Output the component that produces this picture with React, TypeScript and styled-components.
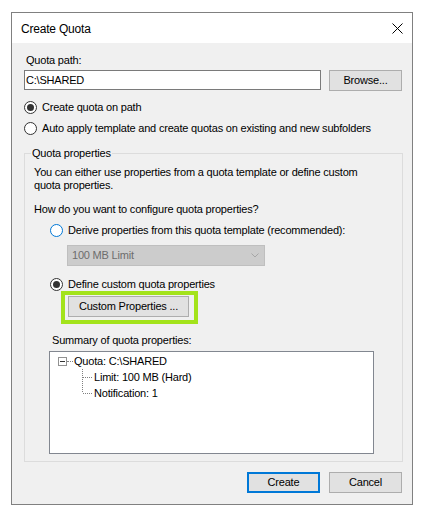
import React from 'react';
import styled, { createGlobalStyle } from 'styled-components';

const Global = createGlobalStyle`
  html, body { margin: 0; padding: 0; background: #fff; }
  body {
    font-family: "Liberation Sans", Arial, sans-serif;
    font-size: 11px;
    color: #000;
  }
  * { box-sizing: border-box; }
`;

const Page = styled.div`
  padding: 12px 0 0 11px;
`;

const Window = styled.div`
  width: 402px;
  height: 493px;
  border: 1px solid #808080;
  display: flex;
  flex-direction: column;
  background: #f0f0f0;
`;

const TitleBar = styled.div`
  height: 30px;
  flex: none;
  background: #fff;
  display: flex;
  align-items: center;
  justify-content: space-between;
  padding: 1px 9px 0 9px;
`;

const Title = styled.span`
  font-size: 12px;
  letter-spacing: -0.2px;
`;

const Body = styled.div`
  flex: 1;
  display: flex;
  flex-direction: column;
  padding: 11px 9px 11px 12px;
  letter-spacing: -0.2px;
  line-height: 13px;
`;

const Label = styled.div<{ $mt?: number; $ml?: number }>`
  line-height: 13px;
  white-space: nowrap;
  margin-top: ${(p) => p.$mt ?? 0}px;
  margin-left: ${(p) => p.$ml ?? 0}px;
`;

const InputRow = styled.div`
  display: flex;
  align-items: flex-start;
  gap: 8px;
  margin-top: 3px;
`;

const TextBox = styled.div`
  width: 297px;
  height: 20px;
  border: 1px solid #7a7a7a;
  background: #fff;
  padding: 0 1px;
  line-height: 18px;
`;

const Button = styled.button<{ $w: number; $primary?: boolean }>`
  width: ${(p) => p.$w}px;
  height: 21px;
  flex: none;
  padding: 0;
  margin: 0;
  font: inherit;
  letter-spacing: inherit;
  color: #000;
  background: #e1e1e1;
  border: ${(p) => (p.$primary ? '2px solid #0078d7' : '1px solid #adadad')};
  line-height: 17px;
`;

const RadioRow = styled.div<{ $mt: number; $ml?: number }>`
  display: flex;
  align-items: center;
  gap: 5px;
  height: 13px;
  line-height: 13px;
  white-space: nowrap;
  margin-top: ${(p) => p.$mt}px;
  margin-left: ${(p) => p.$ml ?? 0}px;
`;

const RadioCircle = styled.span<{ $accent?: boolean }>`
  width: 13px;
  height: 13px;
  flex: none;
  border-radius: 50%;
  border: 1px solid ${(p) => (p.$accent ? '#0078d7' : '#333')};
  background: #fff;
  display: flex;
  align-items: center;
  justify-content: center;
`;

const RadioDot = styled.span`
  width: 7px;
  height: 7px;
  border-radius: 50%;
  background: #333;
`;

const Group = styled.fieldset`
  margin: 12px 0 0 0;
  padding: 6px 8px 7px 9px;
  border: 1px solid #dcdcdc;
  min-width: 0;
  display: flex;
  flex-direction: column;
`;

const Legend = styled.legend`
  margin-left: -3px;
  padding: 0 1px;
  line-height: 13px;
`;

const Paragraph = styled.p`
  margin: 0;
  line-height: 13px;
  white-space: nowrap;
`;

const Combo = styled.div`
  width: 198px;
  height: 21px;
  margin: 8px 0 0 33px;
  background: #cccccc;
  border: 1px solid #bfbfbf;
  color: #6d6d6d;
  display: flex;
  align-items: center;
  justify-content: space-between;
  padding: 0 5px 0 4px;
`;

const Highlight = styled.div`
  align-self: flex-start;
  margin: 0 0 0 27px;
  border: 4px solid #a3e31b;
  padding: 1px 5px 3px 3px;
  display: flex;
`;

const TreeBox = styled.div`
  width: 325px;
  height: 103px;
  margin: 4px 0 0 15px;
  border: 1px solid #828790;
  background: #fff;
  padding: 1px 0 0 8px;
  display: flex;
  flex-direction: column;
`;

const TreeRow = styled.div<{ $indent?: number }>`
  height: 16px;
  display: flex;
  align-items: center;
  white-space: nowrap;
  padding-left: ${(p) => p.$indent ?? 0}px;
`;

const ExpandBox = styled.span`
  width: 9px;
  height: 9px;
  flex: none;
  border: 1px solid #919191;
  background: #fff;
  display: flex;
  align-items: center;
  justify-content: center;
`;

const Minus = styled.span`
  width: 5px;
  height: 1px;
  background: #333;
`;

const Connector = styled.span`
  width: 6px;
  height: 0;
  border-top: 1px dotted #808080;
  margin-right: 1px;
`;

const NodeText = styled.span<{ $ml?: number }>`
  margin-left: ${(p) => p.$ml ?? 0}px;
`;

const Footer = styled.div`
  display: flex;
  justify-content: flex-end;
  gap: 9px;
  margin-top: 10px;
  padding-right: 1px;
`;

const CloseIcon = () => (
  <svg width="11" height="11" viewBox="0 0 11 11" style={{ display: 'block' }}>
    <path d="M0.5 0.5 L10.5 10.5 M10.5 0.5 L0.5 10.5" stroke="#000" strokeWidth="1" fill="none" />
  </svg>
);

const Chevron = () => (
  <svg width="8" height="5" viewBox="0 0 8 5" style={{ display: 'block' }}>
    <path d="M0.5 0.5 L4 4 L7.5 0.5" stroke="#a6a6a6" strokeWidth="1" fill="none" />
  </svg>
);

const Branch = ({ last }: { last?: boolean }) => (
  <svg width="10" height="16" viewBox="0 0 10 16" style={{ display: 'block', flex: 'none' }}>
    <path
      d={`M0.5 0 L0.5 ${last ? 8 : 16} M1 8.5 L10 8.5`}
      stroke="#808080"
      strokeWidth="1"
      strokeDasharray="1 1"
      fill="none"
    />
  </svg>
);

const Radio = ({ checked, accent }: { checked?: boolean; accent?: boolean }) => (
  <RadioCircle $accent={accent}>{checked && <RadioDot />}</RadioCircle>
);

export default function App() {
  return (
    <>
      <Global />
      <Page>
        <Window>
          <TitleBar>
            <Title>Create Quota</Title>
            <CloseIcon />
          </TitleBar>
          <Body>
            <Label $ml={2}>Quota path:</Label>
            <InputRow>
              <TextBox>C:\SHARED</TextBox>
              <Button $w={73}>Browse...</Button>
            </InputRow>
            <RadioRow $mt={10}>
              <Radio checked />
              <span>Create quota on path</span>
            </RadioRow>
            <RadioRow $mt={8}>
              <Radio />
              <span>Auto apply template and create quotas on existing and new subfolders</span>
            </RadioRow>
            <Group>
              <Legend>Quota properties</Legend>
              <Paragraph>
                You can either use properties from a quota template or define custom
                <br />
                quota properties.
              </Paragraph>
              <Label $mt={11}>How do you want to configure quota properties?</Label>
              <RadioRow $mt={8} $ml={16}>
                <Radio accent />
                <span>Derive properties from this quota template (recommended):</span>
              </RadioRow>
              <Combo>
                <span>100 MB Limit</span>
                <Chevron />
              </Combo>
              <RadioRow $mt={12} $ml={16}>
                <Radio checked />
                <span>Define custom quota properties</span>
              </RadioRow>
              <Highlight>
                <Button $w={121}>Custom Properties ...</Button>
              </Highlight>
              <Label $mt={10} $ml={18}>Summary of quota properties:</Label>
              <TreeBox>
                <TreeRow>
                  <ExpandBox>
                    <Minus />
                  </ExpandBox>
                  <Connector />
                  <NodeText>Quota: C:\SHARED</NodeText>
                </TreeRow>
                <TreeRow $indent={24}>
                  <Branch />
                  <NodeText $ml={2}>Limit: 100 MB (Hard)</NodeText>
                </TreeRow>
                <TreeRow $indent={24}>
                  <Branch last />
                  <NodeText $ml={2}>Notification: 1</NodeText>
                </TreeRow>
              </TreeBox>
            </Group>
            <Footer>
              <Button $w={73} $primary>Create</Button>
              <Button $w={73}>Cancel</Button>
            </Footer>
          </Body>
        </Window>
      </Page>
    </>
  );
}
